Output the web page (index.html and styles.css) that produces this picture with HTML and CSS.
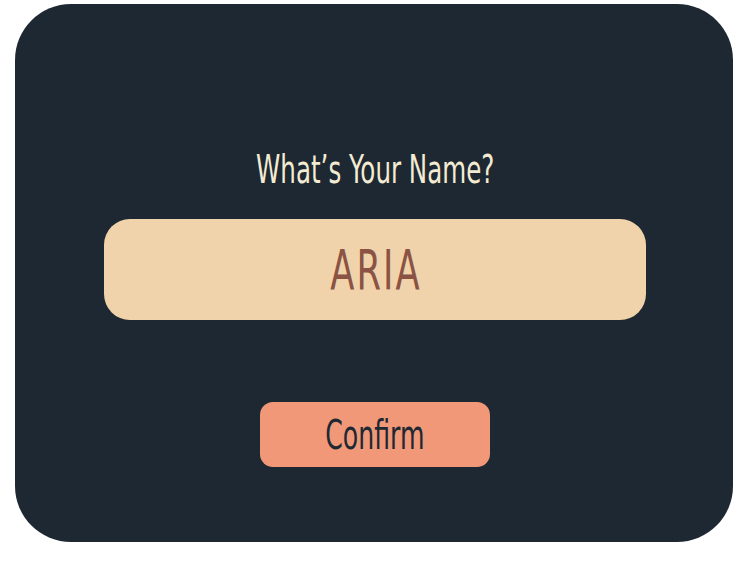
FILE: index.html
```html
<!DOCTYPE html>
<html>
<head>
<meta charset="utf-8">
<link rel="stylesheet" href="styles.css">
</head>
<body>
<main class="card">
  <h1 class="title"><span class="narrow">What’s Your Name?</span></h1>
  <div class="name-field"><span class="narrow aria">ARIA</span></div>
  <button class="confirm"><span class="narrow">Confirm</span></button>
</main>
</body>
</html>
```
FILE: styles.css
```css
html, body {
  margin: 0;
  padding: 0;
  background: #ffffff;
}
body {
  padding: 4px 0 0 15px;
  font-family: "DejaVu Sans Condensed", "DejaVu Sans", sans-serif;
}
.narrow {
  display: inline-block;
  transform: scaleX(0.7);
  transform-origin: center;
  white-space: nowrap;
}
.aria {
  padding-left: 3px;
}
.card {
  box-sizing: border-box;
  width: 718px;
  height: 538px;
  background: #1e2833;
  border-radius: 56px;
  display: flex;
  flex-direction: column;
  align-items: center;
  padding: 140px 0 0 2px;
}
.title {
  margin: 0;
  height: 52px;
  line-height: 52px;
  font-size: 39px;
  font-weight: 400;
  color: #f4ecd2;
}
.name-field {
  margin-top: 23px;
  box-sizing: border-box;
  width: 542px;
  height: 101px;
  border-radius: 26px;
  background: #f1d3ab;
  color: #8a5343;
  font-size: 56px;
  letter-spacing: 3px;
  display: flex;
  align-items: center;
  justify-content: center;
}
.confirm {
  margin-top: 82px;
  width: 230px;
  height: 65px;
  border: none;
  border-radius: 13px;
  background: #f09878;
  color: #1e2833;
  font-family: inherit;
  font-size: 40px;
  padding: 0;
  display: flex;
  align-items: center;
  justify-content: center;
}
```
